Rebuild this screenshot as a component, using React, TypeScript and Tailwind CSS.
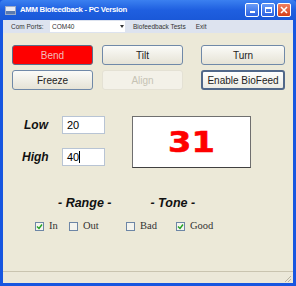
import React from "react";

const font = { fontFamily: '"Liberation Sans", Arial, sans-serif' };

const XpButton = ({
  label,
  variant = "normal",
  w = "w-[81px]",
}: {
  label: string;
  variant?: "normal" | "red" | "disabled" | "default";
  w?: string;
}) => {
  const base = `${w} h-[20px] flex items-center justify-center rounded-[3px] text-[10px]`;
  if (variant === "red")
    return (
      <div className={`${base} bg-[#fe0000] border border-[#5a6f8a] text-[#f3bcbc]`}>{label}</div>
    );
  if (variant === "disabled")
    return <div className={`${base} border border-[#e4e1d4] bg-[#f3f1e8] text-[#c6c3b4]`}>{label}</div>;
  if (variant === "default")
    return (
      <div
        className={`${base} border-2 border-[#51688a] bg-gradient-to-b from-white to-[#ecebe4] text-[#222]`}
      >
        {label}
      </div>
    );
  return (
    <div className={`${base} border border-[#7089a8] bg-gradient-to-b from-[#fbfbf8] to-[#e6e3d6] text-[#222]`}>
      {label}
    </div>
  );
};

const Check = ({ label, checked, w }: { label: string; checked?: boolean; w: string }) => (
  <div
    className={`${w} flex items-center gap-[5px] text-[10.5px] text-[#333]`}
    style={{ fontFamily: '"Liberation Serif", "DejaVu Serif", serif' }}
  >
    <div className="w-[9px] h-[9px] border border-[#6d86a6] bg-[#f4f4ee] flex items-center justify-center">
      {checked && (
        <svg width="7" height="7" viewBox="0 0 7 7">
          <path d="M1 3.5 L3 5.5 L6 1.5" stroke="#21a121" strokeWidth="1.4" fill="none" />
        </svg>
      )}
    </div>
    <span className="leading-none">{label}</span>
  </div>
);

export default function App() {
  return (
    <div className="w-[296px] h-[286px] flex flex-col bg-[#1656e0] overflow-hidden" style={font}>
      {/* title bar */}
      <div className="h-[20px] flex items-center px-[5px] bg-gradient-to-b from-[#3b80f0] via-[#1f5fe0] to-[#1a58d8] rounded-t-[4px]">
        <div className="w-[11px] h-[9px] bg-[#e8ecf4] border border-[#9aa9c8] mr-[4px] flex items-end">
          <div className="w-full h-[3px] bg-[#5a7ab0]" />
        </div>
        <span className="text-white text-[7.8px] font-bold tracking-[-0.3px]">AMM Biofeedback - PC Version</span>
        <div className="ml-auto flex gap-[2px]">
          <div className="w-[14px] h-[14px] rounded-[2px] border border-white bg-gradient-to-b from-[#6a9cf7] to-[#2a60e0] flex items-end justify-center pb-[3px]">
            <div className="w-[5px] h-[2px] bg-white" />
          </div>
          <div className="w-[14px] h-[14px] rounded-[2px] border border-white bg-gradient-to-b from-[#6a9cf7] to-[#2a60e0] flex items-center justify-center">
            <div className="w-[7px] h-[6px] border border-white border-t-2" />
          </div>
          <div className="w-[14px] h-[14px] rounded-[2px] border border-white bg-gradient-to-b from-[#f08060] to-[#d43c14] flex items-center justify-center">
            <svg width="8" height="8" viewBox="0 0 8 8">
              <path d="M1 1 L7 7 M7 1 L1 7" stroke="white" strokeWidth="1.6" />
            </svg>
          </div>
        </div>
      </div>

      <div className="flex-1 flex flex-col px-[3px] pb-[3px]">
        {/* menu bar */}
        <div className="h-[13px] flex items-center bg-[#dde3ef] text-[6.5px] text-[#333]">
          <span className="ml-[8px] w-[39px]">Com Ports:</span>
          <div className="w-[75px] h-[11px] bg-white flex items-center pl-[2px]">
            <span>COM40</span>
            <div className="ml-auto w-[7px] h-[9px] flex items-center justify-center">
              <div className="w-0 h-0 border-l-[2px] border-r-[2px] border-t-[3px] border-l-transparent border-r-transparent border-t-[#333]" />
            </div>
          </div>
          <span className="ml-[8px]">Biofeedback Tests</span>
          <span className="ml-[10px]">Exit</span>
        </div>

        {/* content */}
        <div className="flex-1 flex flex-col bg-[#ece9d8]">
          <div className="pt-[12px] pl-[9px] flex flex-col gap-[5px]">
            <div className="flex">
              <XpButton label="Bend" variant="red" />
              <div className="ml-[9px]">
                <XpButton label="Tilt" />
              </div>
              <div className="ml-[18px]">
                <XpButton label="Turn" w="w-[84px]" />
              </div>
            </div>
            <div className="flex">
              <XpButton label="Freeze" />
              <div className="ml-[9px]">
                <XpButton label="Align" variant="disabled" />
              </div>
              <div className="ml-[18px]">
                <XpButton label="Enable BioFeed" variant="default" w="w-[84px]" />
              </div>
            </div>
          </div>

          <div className="flex mt-[26px]">
            <div className="flex flex-col gap-[14px] pl-[19px]">
              <div className="flex items-center h-[18px]">
                <span className="w-[40px] pl-[2px] text-[12px] font-bold italic text-[#111]">Low</span>
                <div className="w-[43px] h-[18px] bg-white border border-[#b8c4d4] flex items-center pl-[4px] text-[11px] text-black">
                  20
                </div>
              </div>
              <div className="flex items-center h-[18px]">
                <span className="w-[40px] text-[12px] font-bold italic text-[#111]">High</span>
                <div className="w-[43px] h-[18px] bg-white border border-[#b8c4d4] flex items-center pl-[4px] text-[11px] text-black">
                  40<span className="w-[1px] h-[12px] bg-black" />
                </div>
              </div>
            </div>
            <div className="ml-[27px] w-[119px] h-[52px] bg-white border border-[#6f6f6f] border-b-[#404040] flex items-center justify-center">
              <span
                className="text-[28px] font-bold text-[#fe0000] leading-none scale-x-[1.2] pt-[1px]"
                style={{ fontFamily: '"DejaVu Sans", Verdana, sans-serif', WebkitTextStroke: "0.6px #fe0000" }}
              >
                31
              </span>
            </div>
          </div>

          <div className="flex mt-[26px] text-[12.5px] font-bold italic text-[#111]">
            <span className="ml-[55px]">- Range -</span>
            <span className="ml-[39px]">- Tone -</span>
          </div>
          <div className="flex mt-[8px] pl-[32px]">
            <Check label="In" checked w="w-[34px]" />
            <Check label="Out" w="w-[57px]" />
            <Check label="Bad" w="w-[50px]" />
            <Check label="Good" checked w="w-[50px]" />
          </div>

          {/* status bar */}
          <div className="mt-auto h-[12px] border-t border-[#c9c4b0] bg-[#ebe8d9] flex justify-end items-end pr-[1px]">
            <svg width="8" height="8" viewBox="0 0 8 8">
              <path d="M7 1 L1 7 M7 4 L4 7" stroke="#b7b3a2" strokeWidth="1" />
            </svg>
          </div>
        </div>
      </div>
    </div>
  );
}
